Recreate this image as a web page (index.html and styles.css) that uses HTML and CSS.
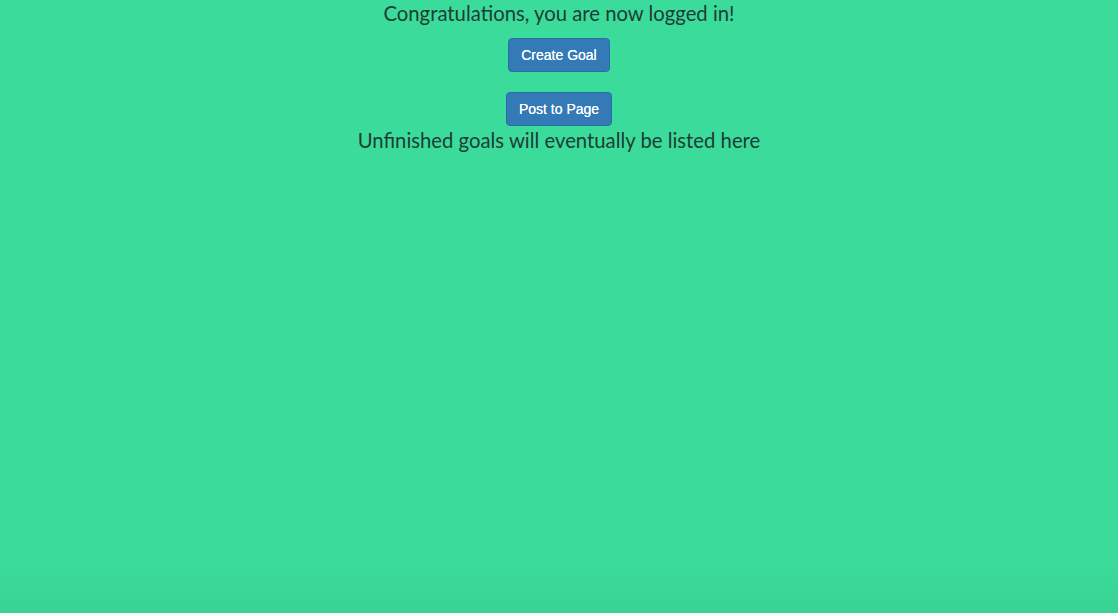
FILE: index.html
```html
<!DOCTYPE html>
<html>
<head>
<meta charset="utf-8">
<link rel="stylesheet" href="styles.css">
</head>
<body>
<div class="page">
  <h3 class="title">Congratulations, you are now logged in!</h3>
  <div class="actions">
    <button class="btn">Create Goal</button>
    <button class="btn">Post to Page</button>
  </div>
  <h3 class="title">Unfinished goals will eventually be listed here</h3>
</div>
</body>
</html>
```
FILE: styles.css
```css
html, body {
  margin: 0;
  height: 100%;
}
body {
  background: #3bdb9b;
  font-family: Lato, "Open Sans", sans-serif;
  color: #1d3d35;
}
.page {
  min-height: 100%;
  display: flex;
  flex-direction: column;
  align-items: center;
  background: linear-gradient(to bottom, rgba(0,0,0,0) 0, rgba(0,0,0,0) 92%, rgba(0,60,30,0.06) 100%);
}
.title {
  margin: 0;
  font-weight: 400;
  font-size: 20.3px;
  line-height: 26px;
}
.actions {
  display: flex;
  flex-direction: column;
  align-items: center;
  gap: 20px;
  margin-top: 12px;
  margin-bottom: 1px;
}
.btn {
  font-family: "Liberation Sans", Arial, sans-serif;
  font-size: 14px;
  line-height: 20px;
  padding: 6px 12px;
  color: #fff;
  background: #337ab7;
  border: 1px solid #2e6da4;
  border-radius: 4px;
  text-shadow: 0 0 0.4px #fff;
}
```
